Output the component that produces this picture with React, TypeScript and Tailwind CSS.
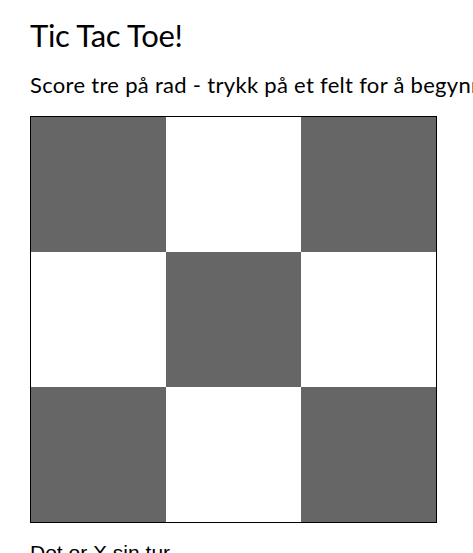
const cells = [true, false, true, false, true, false, true, false, true]

export default function App() {
  return (
    <div className="min-h-screen overflow-hidden bg-white pl-[30px] text-black">
      <h1 className="mt-[15px] whitespace-nowrap font-['Lato',sans-serif] text-[31px] font-normal leading-[40px] tracking-[-0.3px]">
        Tic Tac Toe!
      </h1>
      <p className="mt-[16px] whitespace-nowrap font-['Lato',sans-serif] text-[22px] leading-[28px] tracking-[0.3px]">
        Score tre på rad - trykk på et felt for å begynne
      </p>
      <div className="mt-[17px] grid w-[407px] grid-cols-3 border border-black">
        {cells.map((dark, i) => (
          <div key={i} className={dark ? 'h-[135px] bg-[#666666]' : 'h-[135px] bg-white'} />
        ))}
      </div>
      <p className="mt-[18px] whitespace-nowrap font-['Liberation_Sans',Arial,sans-serif] text-[21px] leading-[24px]">
        Dot or X sin tur
      </p>
    </div>
  )
}
